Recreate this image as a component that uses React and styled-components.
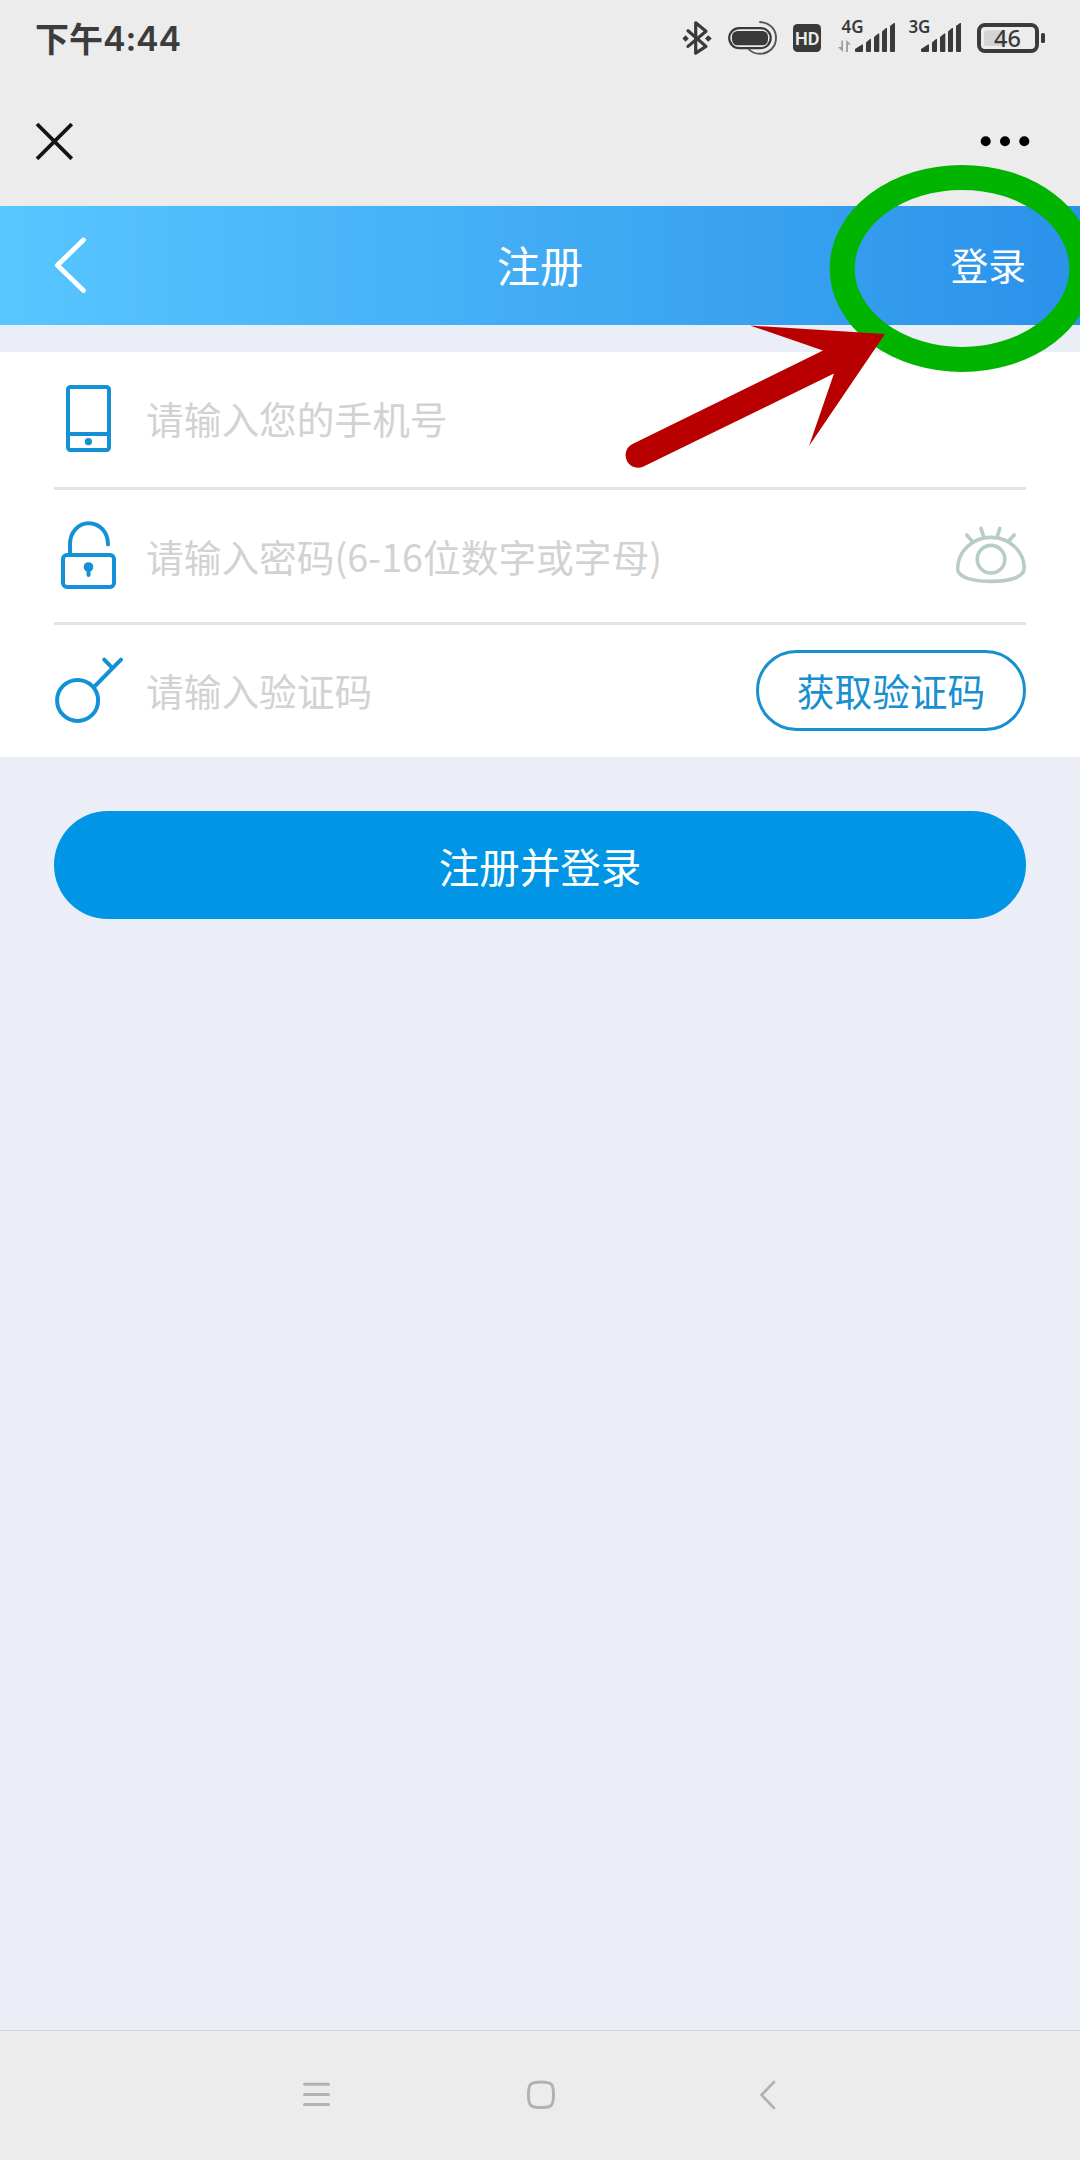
import React from 'react';
import styled, { createGlobalStyle } from 'styled-components';

const GlobalStyle = createGlobalStyle`
  * {
    box-sizing: border-box;
  }

  body {
    margin: 0;
    background-color: #ebeef6;
    font-family: 'Noto Sans CJK SC', sans-serif;
  }

  svg {
    display: block;
    flex-shrink: 0;
  }
`;

const Page = styled.div`
  position: relative;
  display: flex;
  flex-direction: column;
  width: 1080px;
  height: 2160px;
  overflow: hidden;
  background-color: #ebeef6;
`;

const StatusBar = styled.div`
  display: flex;
  justify-content: space-between;
  height: 76px;
  padding: 0 33px 0 35px;
  background-color: #ececec;
`;

const Clock = styled.div`
  display: flex;
  align-items: center;
  height: 76px;
  color: #3c3c3c;
  font-size: 34px;
  font-weight: 700;
  line-height: 76px;
`;

const ClockDigits = styled.span`
  padding-top: 2px;
  font-family: Inter, sans-serif;
  font-weight: 600;
  letter-spacing: -0.2px;
`;

const TitleBar = styled.div`
  display: flex;
  align-items: center;
  justify-content: space-between;
  height: 130px;
  padding: 0 50px 0 35px;
  background-color: #ececec;
`;

const Header = styled.header`
  display: grid;
  grid-template-columns: 1fr auto 1fr;
  align-items: center;
  height: 119px;
  padding: 0 54px;
  color: #fff;
  background: linear-gradient(90deg, #58c6ff, #2a92ea);
`;

const HeaderTitle = styled.h1`
  margin: 0;
  padding-bottom: 4px;
  font-size: 43.2px;
  font-weight: 400;
  line-height: 112px;
`;

const LoginLink = styled.span`
  justify-self: end;
  padding-bottom: 3px;
  font-size: 37.8px;
  line-height: 112px;
`;

const Form = styled.div`
  margin-top: 27px;
  padding: 0 54px;
  background-color: #fff;
`;

const Row = styled.div`
  display: flex;
  align-items: center;
  height: ${(props) => props.$height}px;
  padding-bottom: ${(props) => props.$lift || 0}px;
  border-bottom: ${(props) => (props.$last ? 'none' : '3px solid #e0e4e1')};
`;

const IconBox = styled.div`
  width: 92px;
`;

const Placeholder = styled.span`
  flex: 1;
  padding-bottom: 1px;
  color: #d2d2d2;
  font-size: 37.7px;
  line-height: 54px;
`;

const CodeButton = styled.button`
  width: 270px;
  height: 81px;
  padding: 0 0 2px;
  border: 3px solid #1890d0;
  border-radius: 41px;
  background: none;
  color: #1890d0;
  font-family: inherit;
  font-size: 37.7px;
  line-height: 70px;
`;

const SubmitButton = styled.button`
  height: 108px;
  margin: 54px 54px 0;
  padding: 2px 0 0;
  border: none;
  border-radius: 54px;
  background-color: #0096e5;
  color: #fff;
  font-family: inherit;
  font-size: 40.5px;
  line-height: 106px;
`;

const NavBar = styled.nav`
  display: flex;
  align-items: center;
  height: 130px;
  margin-top: auto;
  padding: 0 0 1px 302px;
  border-top: 1px solid #d0d3d8;
  background-color: #ececec;
`;

const HomeButton = styled.div`
  margin: 0 203px 0 194px;
`;

// guide marks drawn over the page
const Overlay = styled.svg`
  position: absolute;
  top: 0;
  left: 0;
  pointer-events: none;
`;

const bars = [
  [14, 22, 44.5, 49],
  [25, 30, 39, 42.5],
  [33, 38.3, 33.5, 37],
  [41, 46, 28, 31.5],
  [49, 54, 23, 26],
];

const Signal = ({ x, labelX, label }) => (
  <g transform={`translate(${x} 0)`}>
    <text x={labelX} y="33.2" fontFamily="Noto Sans" fontWeight="600" fontSize="17">
      {label}
    </text>
    {bars.map(([l, r, top, side]) => (
      <path key={l} d={`M${l} 51V${side}L${r - 1} ${top}H${r}V51Q${r} 52 ${r - 1} 52H${l + 1}Q${l} 52 ${l} 51Z`} />
    ))}
  </g>
);

const StatusIcons = () => (
  <svg width="367" height="76" viewBox="680 0 367 76" fill="#3a3a3a">
    {/* bluetooth */}
    <path
      d="M688 30.8L706 46.4L695.7 53.2V22.8L706 31.2L688 46.4"
      fill="none"
      stroke="#3a3a3a"
      strokeWidth="3.2"
      strokeLinecap="round"
      strokeLinejoin="round"
    />
    <path d="M682.4 38.5l3.2-3.2 3.2 3.2-3.2 3.2zM705 38.5l3.2-3.2 3.6 3.2-3.6 3.2z" />
    {/* pill */}
    <rect x="729.2" y="28.1" width="41.5" height="20" rx="10" fill="none" stroke="#3a3a3a" strokeWidth="2.2" />
    <rect x="732" y="31" width="36" height="14.3" rx="5.5" />
    <path d="M759.3 22C770 22.3 776 29.5 776 38C776 47 769 53.8 760 53.8C755 53.8 751 52 748 48.5" fill="none" stroke="#555" strokeWidth="1.9" />
    {/* hd */}
    <rect x="793" y="24" width="28" height="28" rx="4.5" />
    <text x="807.2" y="45" textAnchor="middle" fontFamily="Roboto" fontWeight="600" fontSize="18.5" fill="#ececec" textLength="24.5" lengthAdjust="spacingAndGlyphs">
      HD
    </text>
    <path d="M841.3 40.5H843V52L838 47H841.3ZM846.2 52H848V44.5H851L846.2 40Z" fill="#9c9c9c" />
    <Signal x={841} labelX={0.6} label="4G" />
    <Signal x={907} labelX={1.4} label="3G" />
    {/* battery */}
    <rect x="984" y="30.3" width="20" height="15.7" rx="2.5" fill="#d4d4d4" />
    <rect x="979" y="25" width="58" height="26" rx="6" fill="none" stroke="#3a3a3a" strokeWidth="4" />
    <rect x="1041" y="33" width="4" height="10" rx="1.6" />
    <text x="1007.5" y="46.7" textAnchor="middle" fontFamily="Noto Sans" fontWeight="500" fontSize="23.5">
      46
    </text>
  </svg>
);

const PhoneIcon = () => (
  <svg width="70" height="72" viewBox="0 0 70 72" fill="none" stroke="#1291d6" strokeWidth="4">
    <rect x="14" y="4" width="41" height="63" rx="2.5" />
    <path d="M14 51H55" />
    <circle cx="34.4" cy="58.6" r="3.6" fill="#1291d6" stroke="none" />
  </svg>
);

const LockIcon = () => (
  <svg width="70" height="72" viewBox="0 0 70 72" fill="none" stroke="#1291d6" strokeWidth="4">
    <rect x="9" y="35" width="51" height="32" rx="4" />
    <path d="M16 35V24A18.5 20.8 0 0 1 34.5 3.2C46.5 3.2 54 13 54 24.5" strokeLinecap="round" />
    <circle cx="34.5" cy="47" r="4.8" fill="#1291d6" stroke="none" />
    <path d="M34.5 48V55" strokeLinecap="round" />
  </svg>
);

const KeyIcon = () => (
  <svg width="70" height="72" viewBox="0 0 70 72" fill="none" stroke="#1291d6" strokeWidth="4" strokeLinecap="round">
    <circle cx="23.6" cy="45.4" r="20.5" />
    <path d="M40 32L67 4.6M50.2 4.6L58 12.6" />
  </svg>
);

const EyeIcon = () => (
  <svg width="72" height="60" viewBox="0 0 72 60" fill="none" stroke="#b7cdc5" strokeWidth="3.6" strokeLinecap="round">
    <path d="M37 11.4C18 11.4 3.6 26 3.6 43C3.6 51.5 19 55.4 37 55.4C55 55.4 70.2 51.5 70.2 42C70.2 26 56 11.4 37 11.4Z" />
    <circle cx="37" cy="33.2" r="13.8" />
    <path d="M12.7 9L18.6 15.6M27 2.4L29.6 10.6M45.8 2.4L43.2 10.6M60.2 9L54.4 15.2" />
  </svg>
);

const App = () => {
  return (
    <>
      <GlobalStyle />
      <Page>
        <StatusBar>
          <Clock>
            下午<ClockDigits>4:44</ClockDigits>
          </Clock>
          <StatusIcons />
        </StatusBar>

        <TitleBar>
          <svg width="38" height="38" viewBox="0 0 38 38" fill="none" stroke="#141414" strokeWidth="3.8">
            <path d="M2 2L36.8 36.8M36.8 2L2 36.8" />
          </svg>
          <svg width="50" height="12" viewBox="0 0 50 12">
            <circle cx="5.7" cy="6.3" r="5" />
            <circle cx="25" cy="6.3" r="5" />
            <circle cx="44.3" cy="6.3" r="5" />
          </svg>
        </TitleBar>

        <Header>
          <svg width="34" height="58" viewBox="0 0 34 58" fill="none" stroke="#fff" strokeWidth="4.8" strokeLinecap="round" strokeLinejoin="round">
            <path d="M29.4 3L3.4 28.3L29.4 53.5" />
          </svg>
          <HeaderTitle>注册</HeaderTitle>
          <LoginLink>登录</LoginLink>
        </Header>

        <Form>
          <Row $height={138} $lift={2}>
            <IconBox>
              <PhoneIcon />
            </IconBox>
            <Placeholder>请输入您的手机号</Placeholder>
          </Row>
          <Row $height={135}>
            <IconBox>
              <LockIcon />
            </IconBox>
            <Placeholder>请输入密码(6-16位数字或字母)</Placeholder>
            <EyeIcon />
          </Row>
          <Row $height={132} $lift={1} $last>
            <IconBox>
              <KeyIcon />
            </IconBox>
            <Placeholder>请输入验证码</Placeholder>
            <CodeButton>获取验证码</CodeButton>
          </Row>
        </Form>

        <SubmitButton>注册并登录</SubmitButton>

        <NavBar>
          <svg width="30" height="30" viewBox="0 0 30 30" stroke="#b2b2b2" strokeWidth="3" strokeLinecap="round">
            <path d="M2.5 4.3H26.5M2.5 14.5H26.5M2.5 24.6H26.5" />
          </svg>
          <HomeButton>
            <svg width="30" height="30" viewBox="0 0 30 30" fill="none" stroke="#b2b2b2" strokeWidth="3">
              <path d="M15 2C25.5 2 27.5 3.5 27.5 14.8C27.5 26 25.5 27.6 15 27.6C4.5 27.6 2.5 26 2.5 14.8C2.5 3.5 4.5 2 15 2Z" />
            </svg>
          </HomeButton>
          <svg width="18" height="30" viewBox="0 0 18 30" fill="none" stroke="#b2b2b2" strokeWidth="2.6" strokeLinecap="round">
            <path d="M15 2L2.5 15L15 28" />
          </svg>
        </NavBar>

        <Overlay width="1080" height="500" viewBox="0 0 1080 500">
          <ellipse cx="962" cy="268.4" rx="119.8" ry="91" fill="none" stroke="#00b400" strokeWidth="25" />
          <path
            d="M885 334L750 325.5L823 350.5L632 444.2A12.6 12.6 0 0 0 643.5 466.6L834 373.5L809 446Z"
            fill="#b90000"
          />
        </Overlay>
      </Page>
    </>
  );
};

export default App;
